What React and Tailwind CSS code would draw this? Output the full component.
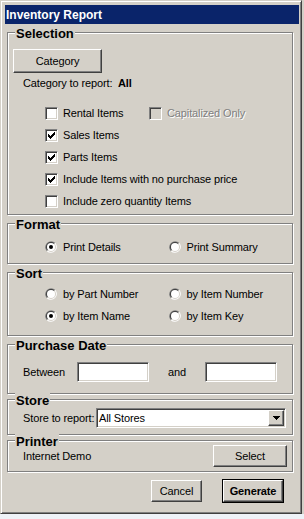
import React from 'react';

// classic win2000 bevels
const raised =
  'bg-[#d4d0c8] border border-t-white border-l-white border-r-[#404040] border-b-[#404040] shadow-[inset_-1px_-1px_0_#808080]';
const sunken =
  'border border-t-[#808080] border-l-[#808080] border-r-white border-b-white shadow-[inset_1px_1px_0_#404040,inset_-1px_-1px_0_#d4d0c8]';

const checkPixels = [
  [6, 0], [5, 1], [6, 1], [0, 2], [4, 2], [5, 2], [6, 2],
  [0, 3], [1, 3], [3, 3], [4, 3], [5, 3],
  [0, 4], [1, 4], [2, 4], [3, 4], [4, 4],
  [1, 5], [2, 5], [3, 5], [2, 6],
];

const Check = ({ checked, disabled }) => (
  <span className={`relative block h-[13px] w-[13px] shrink-0 ${sunken} ${disabled ? 'bg-[#d4d0c8]' : 'bg-white'}`}>
    {checked && (
      <svg className="absolute left-[2px] top-[2px]" width="7" height="7" shapeRendering="crispEdges">
        {checkPixels.map(([x, y]) => (
          <rect key={`${x}-${y}`} x={x} y={y} width="1" height="1" fill="#000" />
        ))}
      </svg>
    )}
  </span>
);

const Radio = ({ checked }) => (
  <svg width="12" height="12" className="shrink-0">
    <path d="M10.24 1.76 A6 6 0 0 0 1.76 10.24 Z" fill="#808080" />
    <path d="M10.24 1.76 A6 6 0 0 1 1.76 10.24 Z" fill="#ffffff" />
    <path d="M9.54 2.46 A5 5 0 0 0 2.46 9.54 Z" fill="#404040" />
    <path d="M9.54 2.46 A5 5 0 0 1 2.46 9.54 Z" fill="#d4d0c8" />
    <circle cx="6" cy="6" r="4" fill="#ffffff" />
    {checked && <circle cx="6" cy="6" r="2" fill="#000" />}
  </svg>
);

const CheckRow = ({ label, checked }) => (
  <div className="flex h-[13px] items-center">
    <Check checked={checked} />
    <span className="ml-[5px] whitespace-nowrap leading-[13px]">{label}</span>
  </div>
);

const RadioItem = ({ label, checked }) => (
  <div className="flex h-[12px] w-[128px] items-center">
    <Radio checked={checked} />
    <span className="ml-[6px] whitespace-nowrap leading-[12px]">{label}</span>
  </div>
);

const Group = ({ title, className, children }) => (
  <div className={`relative w-[286px] border border-[#808080] shadow-[inset_1px_1px_0_#fff,1px_1px_0_#fff] ${className}`}>
    <span className="absolute left-[7px] top-[-7px] bg-[#d4d0c8] px-px text-[13px] font-bold leading-[15px] tracking-normal">
      {title}
    </span>
    {children}
  </div>
);

export default function App() {
  return (
    <div className="h-[519px] w-[304px] overflow-hidden bg-[#d4d0c8] font-['Liberation_Sans',Arial,sans-serif] text-[11px] tracking-[-0.12px] text-black">
      <div className="flex h-[514px] w-[302px] flex-col border border-t-[#d4d0c8] border-l-[#d4d0c8] border-r-[#404040] border-b-[#404040] pl-[4px] pr-[2px] pt-[4px] shadow-[inset_1px_1px_0_#fff,inset_-1px_-1px_0_#808080]">
        {/* title bar */}
        <div className="h-[19px] bg-[#0a246a] pl-[1px] pt-[2px] text-[12px] font-bold leading-[17px] tracking-normal text-white">
          Inventory Report
        </div>

        <div className="ml-[2px] flex flex-col">
          <Group title="Selection" className="mt-[8px] h-[183px]">
            <div className={`ml-[5px] mt-[16px] flex h-[24px] w-[89px] items-center justify-center ${raised}`}>
              Category
            </div>
            <div className="mt-[3px] flex h-[14px] items-center pl-[15px]">
              <span className="w-[95px] whitespace-nowrap">Category to report:</span>
              <span className="font-bold">All</span>
            </div>
            <div className="mt-[17px] flex flex-col gap-[9px] pl-[37px]">
              <div className="flex h-[13px] items-center">
                <div className="flex w-[104px] items-center">
                  <Check />
                  <span className="ml-[5px] whitespace-nowrap leading-[13px]">Rental Items</span>
                </div>
                <Check disabled />
                <span className="ml-[5px] whitespace-nowrap leading-[13px] text-[#808080] [text-shadow:1px_1px_0_#fff]">
                  Capitalized Only
                </span>
              </div>
              <CheckRow label="Sales Items" checked />
              <CheckRow label="Parts Items" checked />
              <CheckRow label="Include Items with no purchase price" checked />
              <CheckRow label="Include zero quantity Items" />
            </div>
          </Group>

          <Group title="Format" className="mt-[8px] h-[41px]">
            <div className="mt-[17px] flex pl-[37px]">
              <RadioItem label="Print Details" checked />
              <RadioItem label="Print Summary" />
            </div>
          </Group>

          <Group title="Sort" className="mt-[8px] h-[64px]">
            <div className="mt-[15px] flex flex-col gap-[10px] pl-[37px]">
              <div className="flex">
                <RadioItem label="by Part Number" />
                <RadioItem label="by Item Number" />
              </div>
              <div className="flex">
                <RadioItem label="by Item Name" checked />
                <RadioItem label="by Item Key" />
              </div>
            </div>
          </Group>

          <Group title="Purchase Date" className="mt-[8px] h-[50px]">
            <div className="mt-[17px] flex items-center pl-[15px]">
              <span className="w-[54px]">Between</span>
              <div className={`h-[20px] w-[72px] bg-white ${sunken}`} />
              <span className="ml-[19px] w-[37px]">and</span>
              <div className={`h-[20px] w-[72px] bg-white ${sunken}`} />
            </div>
          </Group>

          <Group title="Store" className="mt-[5px] h-[36px]">
            <div className="mt-[8px] flex items-center pl-[15px]">
              <span className="w-[73px] shrink-0 whitespace-nowrap">Store to report:</span>
              <div className={`flex h-[20px] w-[190px] items-center justify-between bg-white pl-[2px] pr-[1px] ${sunken}`}>
                <span>All Stores</span>
                <div className={`flex h-[16px] w-[16px] items-center justify-center ${raised}`}>
                  <svg width="7" height="4" shapeRendering="crispEdges">
                    <path d="M0 0h7v1H0zM1 1h5v1H1zM2 2h3v1H2zM3 3h1v1H3z" fill="#000" />
                  </svg>
                </div>
              </div>
            </div>
          </Group>

          <Group title="Printer" className="mt-[5px] h-[32px]">
            <div className="mt-[4px] flex items-center justify-between pl-[15px] pr-[5px]">
              <span>Internet Demo</span>
              <div className={`flex h-[22px] w-[74px] items-center justify-center ${raised}`}>Select</div>
            </div>
          </Group>

          <div className="mt-[7px] flex w-[286px] items-center justify-end gap-[20px] pr-[9px]">
            <div className={`flex h-[22px] w-[51px] items-center justify-center ${raised}`}>Cancel</div>
            <div className="h-[24px] w-[62px] border border-black">
              <div className={`flex h-full w-full items-center justify-center font-bold ${raised}`}>Generate</div>
            </div>
          </div>
        </div>
      </div>
      <div className="h-[5px] bg-[#eef2f8]" />
    </div>
  );
}
